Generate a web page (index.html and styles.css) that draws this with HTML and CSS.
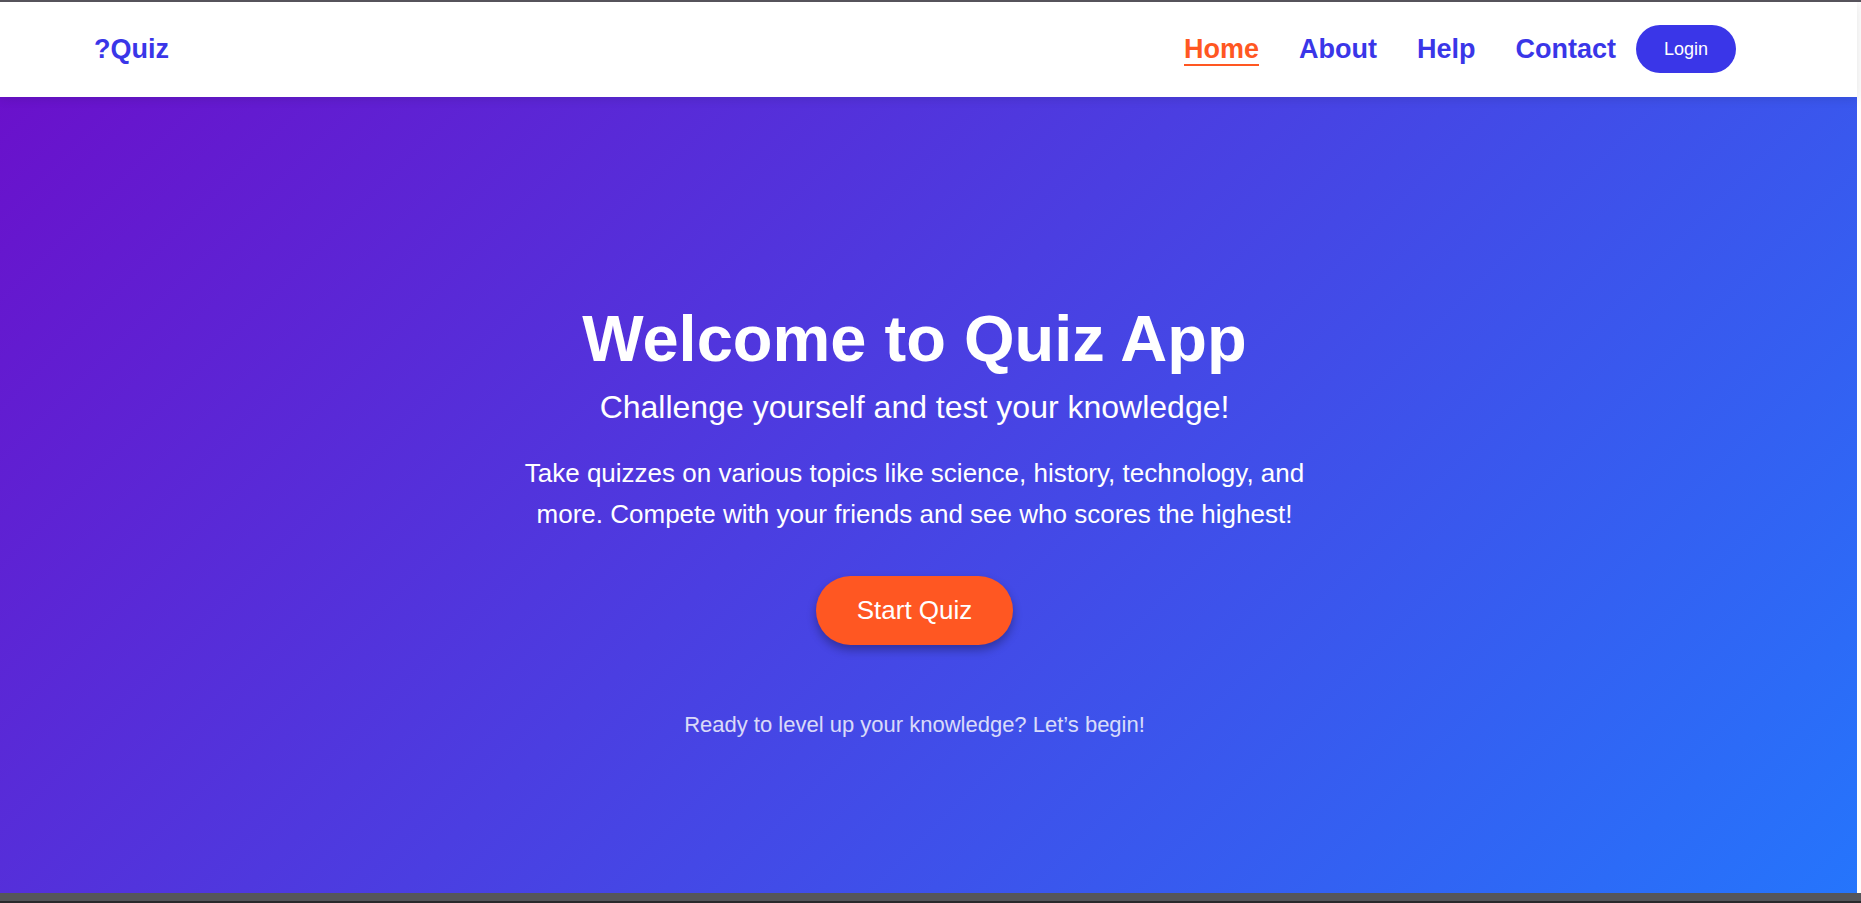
FILE: index.html
```html
<!DOCTYPE html>
<html lang="en">
<head>
<meta charset="utf-8">
<title>Quiz App</title>
<link rel="stylesheet" href="styles.css">
</head>
<body>
<div class="page">
  <header class="header">
    <a class="logo" href="#">?Quiz</a>
    <nav class="nav">
      <a class="nav-link active" href="#">Home</a>
      <a class="nav-link" href="#">About</a>
      <a class="nav-link" href="#">Help</a>
      <a class="nav-link" href="#">Contact</a>
    </nav>
    <button class="login" type="button">Login</button>
  </header>
  <main class="hero">
    <h1 class="title">Welcome to Quiz App</h1>
    <p class="subtitle">Challenge yourself and test your knowledge!</p>
    <p class="intro">Take quizzes on various topics like science, history, technology, and more. Compete with your friends and see who scores the highest!</p>
    <button class="start" type="button">Start Quiz</button>
    <p class="closing">Ready to level up your knowledge? Let’s begin!</p>
  </main>
</div>
</body>
</html>
```
FILE: styles.css
```css
* {
  box-sizing: border-box;
  margin: 0;
  padding: 0;
}

body {
  min-height: 100vh;
  display: flex;
  background: #fdfdfd;
  border-top: 2px solid #56535b;
  border-bottom: 2px solid #29292b;
  font-family: "Liberation Sans", Arial, sans-serif;
}

.page {
  flex: 1;
  display: flex;
  flex-direction: column;
  background: linear-gradient(#55565a, #55565a) bottom / 100% 8px no-repeat;
  padding-bottom: 8px;
}

.header {
  display: flex;
  align-items: center;
  margin-right: 4px;
  padding: 23px 121px 24px 94px;
  background: #fff;
  box-shadow: 0 2px 10px rgba(0, 0, 0, 0.1);
  position: relative;
}

.logo,
.nav-link {
  color: #3a36e8;
  font-size: 27px;
  font-weight: bold;
  line-height: 30px;
  text-decoration: none;
}

.nav {
  display: flex;
  gap: 40px;
  margin-left: auto;
  margin-right: 20px;
}

.nav-link {
  border-top: 2px solid transparent;
  border-bottom: 2px solid transparent;
}

.nav-link.active {
  color: #ff5722;
  border-bottom-color: #ff5722;
}

button {
  border: 0;
  color: #fff;
  font-family: inherit;
  cursor: pointer;
}

.login {
  padding: 14px 28px;
  border-radius: 25px;
  background: #3a36e8;
  font-size: 18px;
  line-height: 20px;
}

.hero {
  flex: 1;
  display: flex;
  flex-direction: column;
  align-items: center;
  justify-content: center;
  margin-right: 4px;
  padding-top: 50px;
  padding-right: 28px;
  background: linear-gradient(135deg, #6a11cb, #2575fc);
  color: #fff;
  text-align: center;
}

.title {
  font-size: 65px;
  line-height: 74px;
  margin-bottom: 13px;
}

.subtitle {
  font-size: 32px;
  line-height: 36px;
  margin-bottom: 28px;
}

.intro {
  max-width: 800px;
  font-size: 26px;
  line-height: 41px;
  margin-bottom: 41px;
}

.start {
  padding: 20px 41px;
  border-radius: 35px;
  background: #ff5722;
  box-shadow: 0 5px 10px rgba(0, 0, 0, 0.3);
  font-size: 26px;
  line-height: 29px;
  margin-bottom: 67px;
}

.closing {
  font-size: 22px;
  line-height: 26px;
  opacity: 0.8;
}
```
